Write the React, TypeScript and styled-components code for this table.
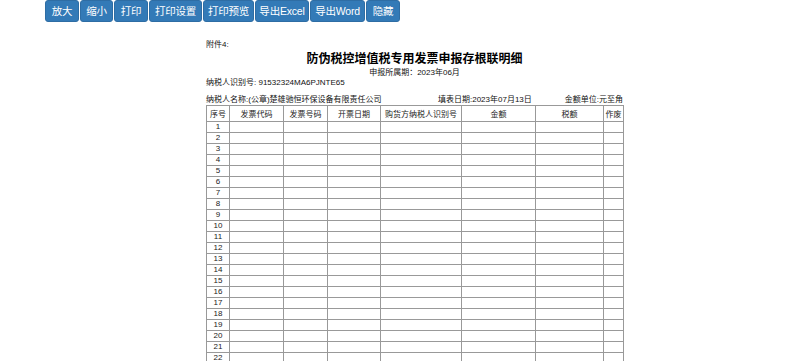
import React from "react";
import styled, { createGlobalStyle } from "styled-components";

const Global = createGlobalStyle`
  html, body { margin: 0; padding: 0; background: #fff; }
  body { font-family: "Liberation Sans", "Noto Sans CJK SC", sans-serif; color: #111; }
`;

const Toolbar = styled.div`
  display: flex;
  gap: 1px;
  padding-left: 45px;
  height: 22px;
`;

const Btn = styled.button<{ $w: number }>`
  width: ${(p) => p.$w}px;
  height: 22px;
  padding: 0;
  border: 1px solid #2e6da4;
  border-radius: 3px;
  background: #337ab7;
  color: #fff;
  font-family: "Liberation Sans", "Noto Sans CJK SC", sans-serif;
  font-size: 10.5px;
  letter-spacing: -0.2px;
  line-height: 20px;
  text-align: center;
  cursor: pointer;
  white-space: nowrap;
`;

const Sheet = styled.div`
  width: 417px;
  margin: 18px 0 0 206px;
  font-family: "Liberation Sans", "Noto Sans CJK SC", sans-serif;
  font-size: 8px;
  color: #111;
`;

const Attach = styled.div`
  height: 10px;
  line-height: 10px;
`;

const Title = styled.div`
  text-align: center;
  font-size: 12px;
  font-weight: bold;
  font-family: "Noto Sans CJK SC", sans-serif;
  line-height: 14px;
  margin: 1px 0 3px;
  color: #000;
`;

const Period = styled.div`
  text-align: center;
  line-height: 10px;
`;

const InfoLine = styled.div`
  line-height: 10px;
`;

const InfoRow = styled.div`
  display: grid;
  grid-template-columns: 232px 1fr auto;
  line-height: 10px;
  margin-top: 7px;
`;

const Table = styled.table`
  border-collapse: collapse;
  width: 417px;
  table-layout: fixed;
  font-size: 8px;
`;

const Th = styled.th`
  border: 1px solid #999;
  height: 15px;
  padding: 0;
  font-weight: normal;
  text-align: center;
  color: #222;
`;

const Td = styled.td<{ $center?: boolean }>`
  border: 1px solid #999;
  height: 10px;
  padding: 0;
  line-height: 10px;
  text-align: ${(p) => (p.$center ? "center" : "left")};
  color: #222;
`;

const buttons = [
  { t: "放大", w: 34 },
  { t: "缩小", w: 33 },
  { t: "打印", w: 34 },
  { t: "打印设置", w: 53 },
  { t: "打印预览", w: 51 },
  { t: "导出Excel", w: 54 },
  { t: "导出Word", w: 55 },
  { t: "隐藏", w: 34 },
];
const cols = [
  { w: 23, t: "序号" },
  { w: 54, t: "发票代码" },
  { w: 44, t: "发票号码" },
  { w: 53, t: "开票日期" },
  { w: 81, t: "购货方纳税人识别号" },
  { w: 74, t: "金额" },
  { w: 68, t: "税额" },
  { w: 20, t: "作废" },
];

export default function App() {
  const rows = Array.from({ length: 22 }, (_, i) => i + 1);
  return (
    <>
      <Global />
      <Toolbar>
        {buttons.map((b) => (
          <Btn key={b.t} $w={b.w}>
            {b.t}
          </Btn>
        ))}
      </Toolbar>
      <Sheet>
        <Attach>附件4:</Attach>
        <Title>防伪税控增值税专用发票申报存根联明细</Title>
        <Period>申报所属期：2023年06月</Period>
        <InfoLine>纳税人识别号: 91532324MA6PJNTE65</InfoLine>
        <InfoRow>
          <span>纳税人名称:(公章)楚雄驰恒环保设备有限责任公司</span>
          <span>填表日期:2023年07月13日</span>
          <span>金额单位:元至角</span>
        </InfoRow>
        <Table>
          <colgroup>
            {cols.map((c) => (
              <col key={c.t} style={{ width: c.w }} />
            ))}
          </colgroup>
          <thead>
            <tr>
              {cols.map((c) => (
                <Th key={c.t}>{c.t}</Th>
              ))}
            </tr>
          </thead>
          <tbody>
            {rows.map((r) => (
              <tr key={r}>
                <Td $center>{r}</Td>
                {cols.slice(1).map((c) => (
                  <Td key={c.t} />
                ))}
              </tr>
            ))}
          </tbody>
        </Table>
      </Sheet>
    </>
  );
}
